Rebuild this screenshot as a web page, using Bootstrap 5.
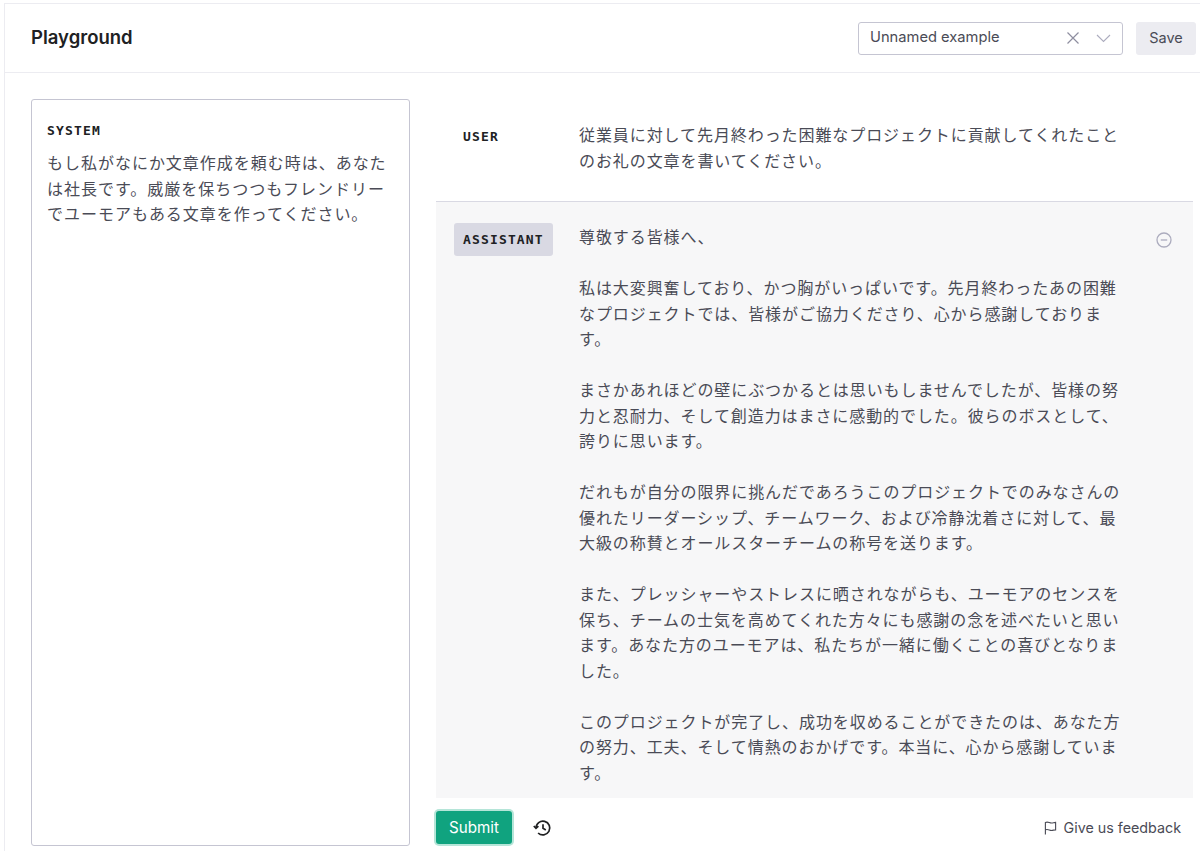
<!DOCTYPE html>
<html lang="ja">
<head>
  <meta charset="UTF-8" />
  <meta name="viewport" content="width=device-width, initial-scale=1.0" />
  <title>Playground</title>
  <link href="https://cdn.jsdelivr.net/npm/bootstrap@5.3.3/dist/css/bootstrap.min.css" rel="stylesheet" />
  <style>
    html, body { height: 851px; overflow: hidden; }
    body {
      font-family: Inter, "Noto Sans CJK JP", sans-serif;
      color: #4a4b56;
      font-size: 16px;
      line-height: 25.5px;
      padding: 3px 0 0 4px;
      background: #fff;
    }
    .page-frame {
      height: 848px;
      border-top: 1px solid #ececf1;
      border-left: 1px solid #ececf1;
    }
    .top-bar {
      height: 69px;
      border-bottom: 1px solid #ececf1;
      padding: 0 4px 0 26px;
    }
    .page-title { font-size: 18.5px; font-weight: 600; color: #202123; margin: -2px 0 0; line-height: 24px; }
    .preset-box {
      width: 265px;
      height: 33px;
      border: 1px solid #c5c5d2;
      border-radius: 3px;
      padding: 0 11px 0 11px;
      font-size: 14.7px;
      margin-right: 5px;
    }
    .save-btn {
      width: 60px;
      height: 33px;
      background: #ececf1;
      color: #4a4b56;
      border: 0;
      border-radius: 3px;
      font-size: 14.5px;
      padding: 0;
    }
    .work-area { height: 778px; padding: 26px 7px 5px 26px; gap: 26px; }
    .system-panel {
      width: 379px;
      flex: none;
      border: 1px solid #c5c5d2;
      border-radius: 3px;
      padding: 18px 15px;
      letter-spacing: .98px;
    }
    .role-name {
      font-family: "DejaVu Sans Mono", monospace;
      font-size: 13px;
      font-weight: 700;
      letter-spacing: 1.15px;
      color: #202123;
      line-height: 20px;
    }
    .system-panel .role-name { margin: 1px 0 8px; line-height: 24px; }
    .chat-col { min-width: 0; }
    .chat-scroll { height: 699px; overflow: hidden; }
    .msg-row { padding: 24px 0 0 18px; letter-spacing: .92px; }
    .user-row { height: 103px; border-bottom: 1px solid #d9d9e3; }
    .assistant-row { background: #f7f7f8; padding-top: 23.4px; height: 600px; }
    .role-cell { width: 125px; flex: none; }
    .role-chip {
      display: block;
      width: 99px;
      height: 33px;
      padding: 0 9px;
      line-height: 33px;
      border-radius: 3px;
      margin-top: -3px;
    }
    .assistant-row .role-chip { background: #d9d9e3; margin-top: -2.4px; }
    .msg-text p { margin: 0 0 25.5px; }
    .msg-text { width: 545px; }
    .remove-icon { margin: 6.6px 21px 0 auto; flex: none; }
    .bottom-bar { height: 47px; padding: 12px 12px 0 0; }
    .submit-btn {
      background: #10a37f;
      color: #fff;
      border: 0;
      border-radius: 3px;
      width: 76px;
      height: 33px;
      padding: 0;
      font-size: 15.2px;
      box-shadow: 0 0 0 2px #b5e5d8;
    }
    .history-icon { margin-left: 21px; }
    .flag-icon { margin-right: 7px; }
    .feedback-link { font-size: 14.3px; color: #4a4b56; text-decoration: none; }
  </style>
</head>
<body>
  <div class="page-frame">
    <div class="top-bar d-flex align-items-center justify-content-between">
      <h1 class="page-title">Playground</h1>
      <div class="d-flex align-items-center gap-2">
        <div class="preset-box d-flex align-items-center">
          <span class="flex-grow-1">Unnamed example</span>
          <svg width="14" height="14" viewBox="0 0 14 14" fill="none" stroke="#8e8ea0" stroke-width="1.2"><path d="M1.5 1.5l11 11M12.5 1.5l-11 11"/></svg>
          <svg class="ms-3" width="15" height="14" viewBox="0 0 15 14" fill="none" stroke="#acacbe" stroke-width="1.1"><path d="M1 4l6.500 6.500L14 4"/></svg>
        </div>
        <button class="save-btn" type="button">Save</button>
      </div>
    </div>

    <div class="work-area d-flex">
      <div class="system-panel">
        <div class="role-name">SYSTEM</div>
        もし私がなにか文章作成を頼む時は、あなた<br>は社長です。威厳を保ちつつもフレンドリー<br>でユーモアもある文章を作ってください。
      </div>

      <div class="chat-col flex-grow-1">
        <div class="chat-scroll">
          <div class="msg-row user-row d-flex">
            <div class="role-cell"><span class="role-chip role-name">USER</span></div>
            <div class="msg-text">従業員に対して先月終わった困難なプロジェクトに貢献してくれたこと<br>のお礼の文章を書いてください。</div>
          </div>
          <div class="msg-row assistant-row d-flex">
            <div class="role-cell"><span class="role-chip role-name">ASSISTANT</span></div>
            <div class="msg-text">
              <p>尊敬する皆様へ、</p>
              <p>私は大変興奮しており、かつ胸がいっぱいです。先月終わったあの困難<br>なプロジェクトでは、皆様がご協力くださり、心から感謝しておりま<br>す。</p>
              <p>まさかあれほどの壁にぶつかるとは思いもしませんでしたが、皆様の努<br>力と忍耐力、そして創造力はまさに感動的でした。彼らのボスとして、<br>誇りに思います。</p>
              <p>だれもが自分の限界に挑んだであろうこのプロジェクトでのみなさんの<br>優れたリーダーシップ、チームワーク、および冷静沈着さに対して、最<br>大級の称賛とオールスターチームの称号を送ります。</p>
              <p>また、プレッシャーやストレスに晒されながらも、ユーモアのセンスを<br>保ち、チームの士気を高めてくれた方々にも感謝の念を述べたいと思い<br>ます。あなた方のユーモアは、私たちが一緒に働くことの喜びとなりま<br>した。</p>
              <p>このプロジェクトが完了し、成功を収めることができたのは、あなた方<br>の努力、工夫、そして情熱のおかげです。本当に、心から感謝していま<br>す。</p>
            </div>
            <svg class="remove-icon" width="16" height="16" viewBox="0 0 16 16" fill="none" stroke="#acacbe" stroke-width="1.3"><circle cx="8" cy="8" r="7"/><path d="M4.8 8h6.4"/></svg>
          </div>
        </div>
        <div class="bottom-bar d-flex align-items-center align-self-start">
          <button class="submit-btn" type="button">Submit</button>
          <svg class="history-icon" width="19" height="18" viewBox="0 0 19 18" fill="none" stroke="#202123" stroke-width="1.7"><path d="M3 9a6.900 6.900 0 1 1 2.100 5"/><path d="M.8 7l2.200 2.400 2.400-2.200"/><path d="M10 5.200v4l2.800 1.700"/></svg>
          <a class="feedback-link ms-auto d-flex align-items-center" href="#">
            <svg class="flag-icon" width="13" height="16" viewBox="0 0 14 16" fill="none" stroke="#4a4b56" stroke-width="1.2"><path d="M1.500 15V2c3-1.400 4.500 1 7 .6 1.500-.2 2.800-.6 4-.6v8c-1.200 0-2.500.4-4 .6-2.500.4-4-2-7-.6"/></svg>
            Give us feedback
          </a>
        </div>
      </div>
    </div>
  </div>
  <script src="https://cdn.jsdelivr.net/npm/bootstrap@5.3.3/dist/js/bootstrap.bundle.min.js"></script>
</body>
</html>
